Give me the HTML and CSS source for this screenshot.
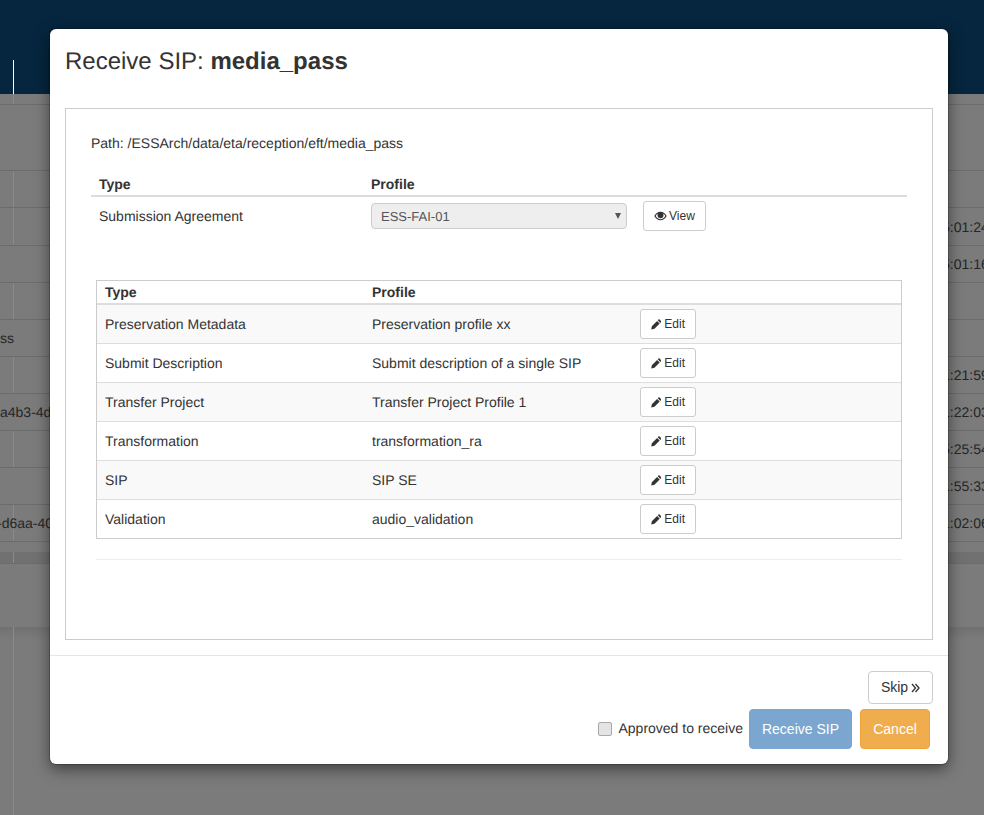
FILE: index.html
```html
<!DOCTYPE html>
<html lang="en">
  <head>
    <meta charset="UTF-8" />
    <title>Receive SIP</title>
    <link rel="stylesheet" href="styles.css">
  </head>
  <body>
    <!-- dimmed page behind the modal -->
    <div class="page">
      <div class="topbar"></div>
      <div class="strip strip-top"></div>
      <div class="strip strip-h66"></div>
      <div class="strip split"></div>
      <div class="strip strip-tall split"><span></span><span class="time">5:01:24</span></div>
      <div class="strip"><span></span><span class="time">5:01:16</span></div>
      <div class="strip split"></div>
      <div class="strip"><span>ss</span></div>
      <div class="strip split"><span></span><span class="time">1:21:59</span></div>
      <div class="strip"><span>a4b3-4d</span><span class="time">1:22:03</span></div>
      <div class="strip split"><span></span><span class="time">5:25:54</span></div>
      <div class="strip"><span></span><span class="time">1:55:33</span></div>
      <div class="strip split"><span class="cut">-d6aa-40</span><span class="time">1:02:06</span></div>
      <div class="strip strip-gap"></div>
      <div class="strip strip-plain"></div>
      <div class="strip strip-end"></div>
    </div>

    <div class="modal">
      <div class="modal-header">
        <h4>Receive SIP: <b>media_pass</b></h4>
      </div>
      <div class="modal-body">
        <div class="box">
          <p class="path">Path: /ESSArch/data/eta/reception/eft/media_pass</p>

          <table class="sa-table">
            <thead>
              <tr><th class="col-type">Type</th><th>Profile</th></tr>
            </thead>
            <tbody>
              <tr>
                <td>Submission Agreement</td>
                <td>
                  <div class="sa-controls">
                    <div class="fake-select">ESS-FAI-01<span class="caret"></span></div>
                    <button class="btn btn-sm" type="button">
                      <svg class="ico" width="13" height="10" viewBox="0 0 13 10"><path d="M6.5 0.8C3.8 0.8 1.6 2.6 0.3 5c1.3 2.4 3.500 4.200 6.200 4.200S11.400 7.400 12.700 5C11.400 2.600 9.200 0.800 6.500 0.800zM6.500 8.300C4.500 8.300 2.800 6.900 1.600 5c0.600-1 1.400-1.800 2.400-2.400C3.700 3.100 3.500 3.600 3.500 4.200c0 1.700 1.300 3 3 3s3-1.300 3-3c0-0.600-0.200-1.100-0.500-1.600 1 0.600 1.800 1.400 2.400 2.400C10.200 6.900 8.500 8.300 6.500 8.300z" fill="#333"/></svg>
                      View
                    </button>
                  </div>
                </td>
              </tr>
            </tbody>
          </table>

          <table class="profile-table">
            <thead>
              <tr><th class="col-a">Type</th><th class="col-b">Profile</th><th></th></tr>
            </thead>
            <tbody>
              <tr><td>Preservation Metadata</td><td>Preservation profile xx</td><td><button class="btn btn-sm btn-edit" type="button"><svg class="ico-edit" width="11" height="11" viewBox="0 0 11 11"><path d="M0.200 10.800L0.900 7.300 6.500 1.700 9.300 4.500 3.700 10.100zM7.200 1L8 0.200C8.400-0.100 8.800-0.100 9.100 0.200L10.800 1.900C11.100 2.200 11.100 2.600 10.800 3L10 3.800z" fill="#333"/></svg>Edit</button></td></tr>
              <tr><td>Submit Description</td><td>Submit description of a single SIP</td><td><button class="btn btn-sm btn-edit" type="button"><svg class="ico-edit" width="11" height="11" viewBox="0 0 11 11"><path d="M0.200 10.800L0.900 7.300 6.500 1.700 9.300 4.500 3.700 10.100zM7.200 1L8 0.200C8.400-0.100 8.800-0.100 9.100 0.200L10.800 1.900C11.100 2.200 11.100 2.600 10.800 3L10 3.800z" fill="#333"/></svg>Edit</button></td></tr>
              <tr><td>Transfer Project</td><td>Transfer Project Profile 1</td><td><button class="btn btn-sm btn-edit" type="button"><svg class="ico-edit" width="11" height="11" viewBox="0 0 11 11"><path d="M0.200 10.800L0.900 7.300 6.500 1.700 9.300 4.500 3.700 10.100zM7.200 1L8 0.200C8.400-0.100 8.800-0.100 9.100 0.200L10.800 1.900C11.100 2.200 11.100 2.600 10.800 3L10 3.800z" fill="#333"/></svg>Edit</button></td></tr>
              <tr><td>Transformation</td><td>transformation_ra</td><td><button class="btn btn-sm btn-edit" type="button"><svg class="ico-edit" width="11" height="11" viewBox="0 0 11 11"><path d="M0.200 10.800L0.900 7.300 6.500 1.700 9.300 4.500 3.700 10.100zM7.200 1L8 0.200C8.400-0.100 8.800-0.100 9.100 0.200L10.800 1.900C11.100 2.200 11.100 2.600 10.800 3L10 3.800z" fill="#333"/></svg>Edit</button></td></tr>
              <tr><td>SIP</td><td>SIP SE</td><td><button class="btn btn-sm btn-edit" type="button"><svg class="ico-edit" width="11" height="11" viewBox="0 0 11 11"><path d="M0.200 10.800L0.900 7.300 6.500 1.700 9.300 4.500 3.700 10.100zM7.200 1L8 0.200C8.400-0.100 8.800-0.100 9.100 0.200L10.800 1.900C11.100 2.200 11.100 2.600 10.800 3L10 3.800z" fill="#333"/></svg>Edit</button></td></tr>
              <tr><td>Validation</td><td>audio_validation</td><td><button class="btn btn-sm btn-edit" type="button"><svg class="ico-edit" width="11" height="11" viewBox="0 0 11 11"><path d="M0.200 10.800L0.900 7.300 6.500 1.700 9.300 4.500 3.700 10.100zM7.200 1L8 0.200C8.400-0.100 8.800-0.100 9.100 0.200L10.800 1.900C11.100 2.200 11.100 2.600 10.800 3L10 3.800z" fill="#333"/></svg>Edit</button></td></tr>
            </tbody>
          </table>

          <hr class="divider" />
        </div>
      </div>
      <div class="modal-footer">
        <button class="btn btn-skip" type="button">Skip<svg class="skip-arrows" width="9" height="10" viewBox="0 0 9 10"><path d="M1 1l3.500 4L1 9M4.500 1L8 5 4.500 9" fill="none" stroke="#333" stroke-width="1.300"/></svg></button>
        <div class="footer-row">
          <label class="approve"><input type="checkbox" class="check" />Approved to receive</label>
          <button class="btn btn-main btn-receive" type="button">Receive SIP</button>
          <button class="btn btn-main btn-cancel" type="button">Cancel</button>
        </div>
      </div>
    </div>
  </body>
</html>
```

FILE: styles.css
```css
* {
  box-sizing: border-box;
}

html,
body {
  height: 100%;
}

body {
  margin: 0;
  height: 815px;
  overflow: hidden;
  background-color: #7b7b7b;
  font-family: "Liberation Sans", Arial, sans-serif;
  font-size: 14px;
  line-height: 20px;
  color: #333;
  text-rendering: geometricPrecision;
}

/* page behind the modal */
.page {
  height: 815px;
  overflow: hidden;
}

.topbar {
  height: 94px;
  background-color: #05263e;
  background-image: linear-gradient(#fff, #fff);
  background-position: 13px 60px;
  background-size: 1px 34px;
  background-repeat: no-repeat;
}

.strip {
  display: flex;
  justify-content: space-between;
  align-items: center;
  height: 37px;
  border-bottom: 1px solid #6c6c6c;
  color: #262626;
  white-space: nowrap;
  overflow: hidden;
}

.split {
  background-image: linear-gradient(#8a8a8a, #8a8a8a);
  background-position: 13px 0;
  background-size: 1px 100%;
  background-repeat: no-repeat;
}

.strip-top {
  height: 11px;
  background-image: linear-gradient(#8a8a8a, #8a8a8a);
  background-position: 13px 0;
  background-size: 1px 100%;
  background-repeat: no-repeat;
}

.strip-h66 {
  height: 66px;
}

.strip-tall {
  height: 38px;
}

.strip .time {
  width: 42px;
  overflow: hidden;
}

.cut {
  margin-left: -3px;
}

.strip-gap {
  height: 22px;
  background-color: #7b7b7b;
  background-image: linear-gradient(#8a8a8a, #8a8a8a), linear-gradient(#717171, #717171);
  background-position: 13px 10px, 0 10px;
  background-size: 1px 11px, 100% 11px;
  background-repeat: no-repeat;
}

.strip-plain {
  height: 63px;
  border: 0;
}

.strip-end {
  height: 188px;
  border: 0;
  background-image: linear-gradient(#8a8a8a, #8a8a8a), linear-gradient(#717171, #7b7b7b);
  background-position: 13px 0, 0 0;
  background-size: 1px 100%, 100% 13px;
  background-repeat: no-repeat;
}

/* modal */
.modal {
  position: absolute;
  left: 50px;
  top: 29px;
  width: 898px;
  height: 735px;
  background-color: #fff;
  border-radius: 6px;
  box-shadow: 0 5px 15px rgba(0, 0, 0, 0.5), 0 0 0 1px rgba(0, 0, 0, 0.2);
}

.modal-header {
  height: 64px;
  padding: 19px 15px 0;
}

.modal-header h4 {
  margin: 0;
  font-size: 24px;
  font-weight: normal;
  line-height: 28px;
}

.modal-body {
  padding: 15px;
  border-bottom: 1px solid #e5e5e5;
  height: 563px;
}

.box {
  height: 532px;
  padding: 24px 25px 0;
  border: 1px solid #ccc;
}

.path {
  margin: 0 0 20px;
}

table {
  border-spacing: 0;
  table-layout: fixed;
}

th {
  text-align: left;
}

.sa-table {
  width: 816px;
}

.sa-table th {
  padding: 1px 8px;
  border-bottom: 2px solid #ddd;
}

.sa-table td {
  padding: 4px 8px;
}

.col-type {
  width: 272px;
}

.sa-controls {
  display: flex;
  align-items: center;
  gap: 16px;
}

.fake-select {
  position: relative;
  width: 256px;
  height: 26px;
  padding: 0 9px;
  font-size: 13px;
  line-height: 25px;
  color: #555;
  background-color: #eee;
  border: 1px solid #ccc;
  border-radius: 4px;
}

.caret {
  position: absolute;
  right: 5px;
  top: 9px;
  border-top: 6px solid #555;
  border-left: 3px solid transparent;
  border-right: 3px solid transparent;
}

.btn {
  display: inline-flex;
  align-items: center;
  justify-content: center;
  font-family: inherit;
  color: #333;
  background-color: #fff;
  border: 1px solid #ccc;
  border-radius: 4px;
  white-space: nowrap;
}

.btn-sm {
  height: 30px;
  padding: 0 10px;
  font-size: 12px;
  border-radius: 3px;
}

.ico {
  margin-right: 2px;
}

.ico-edit {
  margin-right: 3px;
}

.btn-edit {
  width: 56px;
}

.profile-table {
  width: 806px;
  margin: 45px 0 0 5px;
  border: 1px solid #ccc;
}

.profile-table th {
  padding: 1px 8px;
  border-bottom: 2px solid #ddd;
}

.col-a {
  width: 267px;
}

.col-b {
  width: 268px;
}

.profile-table td {
  padding: 4px 8px;
  border-bottom: 1px solid #ddd;
}

.profile-table tbody tr:last-child td {
  border-bottom: 0;
}

.profile-table tbody tr:nth-child(odd) {
  background-color: #f9f9f9;
}

.divider {
  width: 806px;
  margin: 20px 0 0 5px;
  border: 0;
  border-top: 1px solid #eee;
}

.modal-footer {
  display: flex;
  flex-direction: column;
  align-items: flex-end;
  padding: 15px 15px 0;
  gap: 5px;
}

.btn-skip {
  width: 65px;
  height: 33px;
  padding: 0 0 2px;
  font-size: 14px;
}

.skip-arrows {
  margin: 2px 0 0 3px;
}

.footer-row {
  display: flex;
  align-items: center;
  gap: 8px;
  margin-right: 3px;
}

.approve {
  display: flex;
  align-items: center;
  gap: 6px;
  margin: -2px -2px 0 0;
}

.check {
  appearance: none;
  width: 14px;
  height: 14px;
  margin: 2px 0 0;
  background-color: #e4e4e4;
  border: 1px solid #a9a9a9;
  border-radius: 2px;
}

.btn-main {
  height: 40px;
  padding: 0;
  font-size: 14px;
  color: #fff;
  border-radius: 4px;
}

.btn-receive {
  width: 103px;
  background-color: #7aa6cf;
  border-color: #79a5ce;
}

.btn-cancel {
  width: 70px;
  background-color: #f0ad4e;
  border-color: #eea236;
}
```
